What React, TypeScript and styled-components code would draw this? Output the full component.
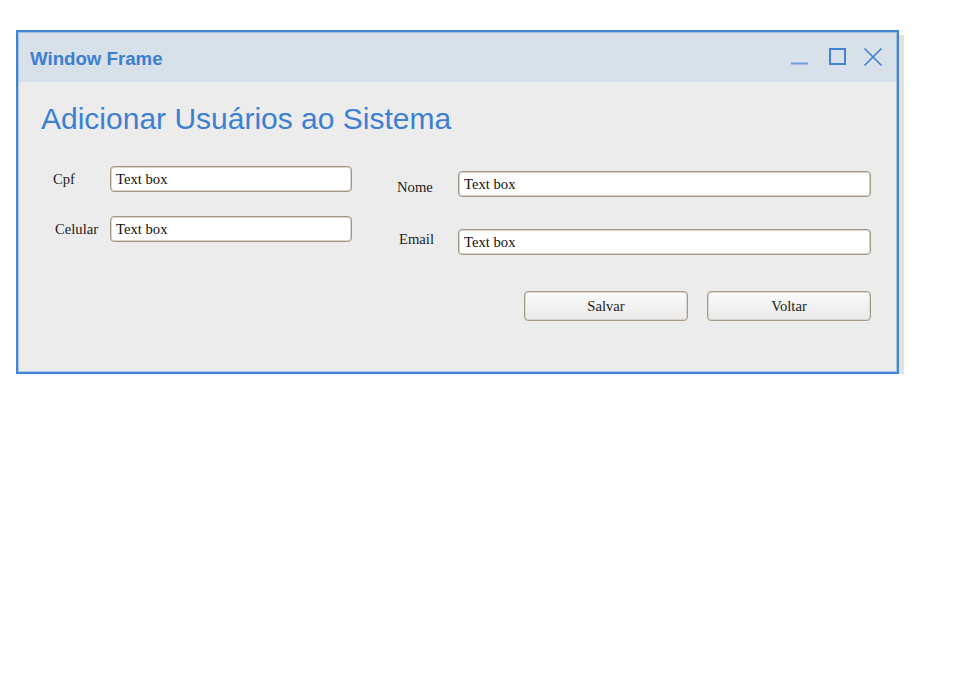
import React from "react";
import styled, { createGlobalStyle } from "styled-components";

const GlobalStyle = createGlobalStyle`
  html, body { margin: 0; padding: 0; background: #ffffff; }
  * { box-sizing: border-box; }
`;

const Page = styled.div`
  padding: 30px 0 0 16px;
`;

const Window = styled.div`
  width: 883px;
  height: 344px;
  border: 2px solid #4185d8;
  outline: 1px solid rgba(65, 133, 216, 0.35);
  outline-offset: -3px;
  background: #ececec;
  box-shadow: 5px 5px 0 0 #e2e2e2;
  display: flex;
  flex-direction: column;
`;

const TitleBar = styled.div`
  height: 50px;
  flex: none;
  background: #d8e0ea;
  display: flex;
  align-items: center;
  justify-content: space-between;
  padding: 0 14px 0 12px;
`;

const Title = styled.div`
  font-family: "Liberation Sans", Arial, sans-serif;
  font-weight: bold;
  font-size: 18.67px;
  color: #3b7fd1;
  padding-top: 3px;
`;

const Controls = styled.div`
  display: flex;
  align-items: center;
  padding-top: 2px;
`;

const ControlIcon = styled.svg<{ $gap?: number }>`
  display: block;
  width: 20px;
  height: 20px;
  margin-left: ${(p) => p.$gap ?? 0}px;
`;

const Body = styled.div`
  flex: 1;
  padding: 20px 26px 0 23px;
`;

const Heading = styled.h1`
  margin: 0;
  font-family: "Liberation Sans", Arial, sans-serif;
  font-weight: normal;
  font-size: 30px;
  line-height: 34px;
  color: #3c80d2;
`;

const Form = styled.div`
  display: flex;
  gap: 45px;
  padding-left: 12px;
`;

const Column = styled.div<{ $top: number; $gap: number; $width: number }>`
  width: ${(p) => p.$width}px;
  margin-top: ${(p) => p.$top}px;
  display: flex;
  flex-direction: column;
  gap: ${(p) => p.$gap}px;
`;

const Row = styled.div<{ $labelWidth: number }>`
  display: grid;
  grid-template-columns: ${(p) => p.$labelWidth}px 1fr;
  align-items: center;
`;

const Label = styled.label<{ $indent?: number; $down?: number; $up?: number }>`
  font-family: "Liberation Serif", "Times New Roman", serif;
  font-size: 14.67px;
  color: #222;
  padding-left: ${(p) => p.$indent ?? 0}px;
  padding-top: ${(p) => p.$down ?? 0}px;
  padding-bottom: ${(p) => p.$up ?? 0}px;
`;

const TextBox = styled.input`
  height: 26px;
  width: 100%;
  border: 1px solid #a29787;
  border-radius: 4px;
  box-shadow: inset 0 0 0 1px #d9d3cb;
  background: #ffffff;
  padding: 1px 5px 0;
  font-family: "Liberation Serif", "Times New Roman", serif;
  font-size: 14.67px;
  color: #111;
  outline: none;
`;

const Actions = styled.div`
  display: flex;
  justify-content: flex-end;
  gap: 19px;
  margin-top: 36px;
`;

const Button = styled.button`
  width: 164px;
  height: 30px;
  border: 1px solid #a69a8a;
  border-radius: 4px;
  box-shadow: inset 0 0 0 1px #ddd7cf;
  background: linear-gradient(#fbfbfb, #e9e9e9);
  font-family: "Liberation Serif", "Times New Roman", serif;
  font-size: 14.67px;
  color: #222;
  padding: 0;
  cursor: pointer;
`;

export default function App() {
  return (
    <>
      <GlobalStyle />
      <Page>
        <Window>
          <TitleBar>
            <Title>Window Frame</Title>
            <Controls>
              <ControlIcon viewBox="0 0 20 20">
                <line x1="2" y1="15.5" x2="19" y2="15.5" stroke="#6f9fdc" strokeWidth="2" />
              </ControlIcon>
              <ControlIcon viewBox="0 0 20 20" $gap={19}>
                <rect x="2" y="1" width="15" height="15" fill="none" stroke="#3f82d6" strokeWidth="2" />
              </ControlIcon>
              <ControlIcon viewBox="0 0 20 20" $gap={15}>
                <path d="M1.5 0.5 L18.5 17.5 M18.5 0.5 L1.5 17.5" stroke="#3f82d6" strokeWidth="1.6" fill="none" />
              </ControlIcon>
            </Controls>
          </TitleBar>
          <Body>
            <Heading>Adicionar Usuários ao Sistema</Heading>
            <Form>
              <Column $top={30} $gap={24} $width={299}>
                <Row $labelWidth={57}>
                  <Label>Cpf</Label>
                  <TextBox defaultValue="Text box" />
                </Row>
                <Row $labelWidth={57}>
                  <Label $indent={2}>Celular</Label>
                  <TextBox defaultValue="Text box" />
                </Row>
              </Column>
              <Column $top={35} $gap={32} $width={474}>
                <Row $labelWidth={61}>
                  <Label $down={6}>Nome</Label>
                  <TextBox defaultValue="Text box" />
                </Row>
                <Row $labelWidth={61}>
                  <Label $indent={2} $up={6}>Email</Label>
                  <TextBox defaultValue="Text box" />
                </Row>
              </Column>
            </Form>
            <Actions>
              <Button>Salvar</Button>
              <Button>Voltar</Button>
            </Actions>
          </Body>
        </Window>
      </Page>
    </>
  );
}
